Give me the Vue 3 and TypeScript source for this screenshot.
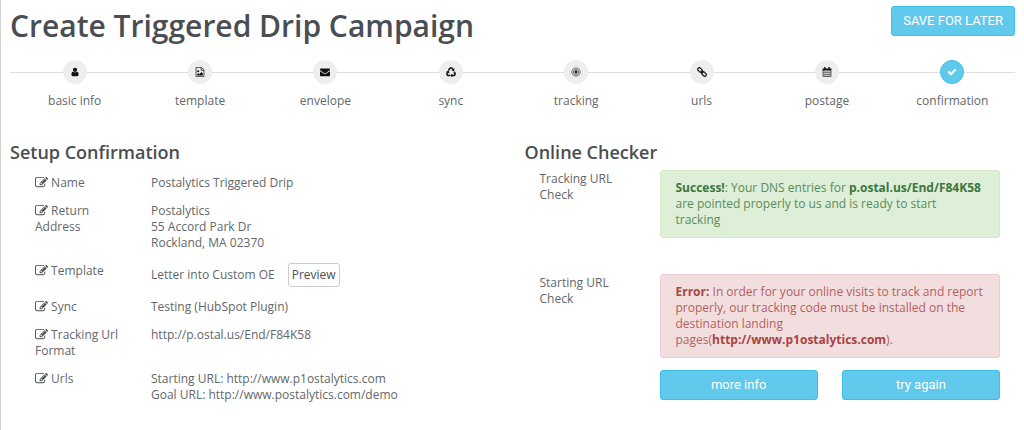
<script setup lang="ts">
interface Step {
  name: string
  icon: string
}

interface Row {
  label: string
  lines: string[]
  preview?: boolean
}

const steps: Step[] = [
  { name: 'basic info', icon: 'user' },
  { name: 'template', icon: 'image' },
  { name: 'envelope', icon: 'envelope' },
  { name: 'sync', icon: 'recycle' },
  { name: 'tracking', icon: 'target' },
  { name: 'urls', icon: 'link' },
  { name: 'postage', icon: 'calendar' },
  { name: 'confirmation', icon: 'check' },
]
const current = 'confirmation'

const rows: Row[] = [
  { label: 'Name', lines: ['Postalytics Triggered Drip'] },
  { label: 'Return Address', lines: ['Postalytics', '55 Accord Park Dr', 'Rockland, MA 02370'] },
  { label: 'Template', lines: ['Letter into Custom OE'], preview: true },
  { label: 'Sync', lines: ['Testing (HubSpot Plugin)'] },
  { label: 'Tracking Url Format', lines: ['http://p.ostal.us/End/F84K58'] },
  {
    label: 'Urls',
    lines: ['Starting URL: http://www.p1ostalytics.com', 'Goal URL: http://www.postalytics.com/demo'],
  },
]
</script>

<template>
  <main class="page">
    <header class="top">
      <h1>Create Triggered Drip Campaign</h1>
      <button type="button" class="primary save">SAVE FOR LATER</button>
    </header>

    <ol class="steps">
      <li v-for="s in steps" :key="s.name" :class="{ active: s.name === current }">
        <span class="dot">
          <svg v-if="s.icon === 'user'" viewBox="0 0 1792 1792" aria-hidden="true"><path d="M1536 1399q0 109-62.5 187t-150.5 78h-854q-88 0-150.5-78t-62.5-187q0-85 8.5-160.5t31.5-152 58.5-131 94-89 134.5-34.5q131 128 313 128t313-128q76 0 134.5 34.5t94 89 58.5 131 31.5 152 8.5 160.5zm-256-887q0 159-112.5 271.5t-271.5 112.5-271.5-112.5-112.5-271.5 112.5-271.5 271.5-112.5 271.5 112.5 112.5 271.5z" /></svg>
          <svg v-else-if="s.icon === 'image'" viewBox="0 0 14 14" aria-hidden="true"><path d="M1.5.5h7.500l3.500 3.500v9.500h-11z M8.500.5v4h4" fill="none" stroke="currentColor" /><circle cx="4.500" cy="6" r="1.500" /><path d="M3 12v-2l1.500-1.500 1.500 1.500 3-3 2 2v3z" /></svg>
          <svg v-else-if="s.icon === 'envelope'" viewBox="0 0 1792 1792" aria-hidden="true"><path d="M1792 710v794q0 66-47 113t-113 47h-1472q-66 0-113-47t-47-113v-794q44 49 101 87 362 246 497 345 57 42 92.500 65.500t94.500 48 110 24.500h2q51 0 110-24.500t94.500-48 92.500-65.500q170-123 498-345 57-39 100-87zm0-294q0 79-49 151t-122 123q-376 261-468 325-10 7-42.500 31t-54 38.500-52 32.500-57.500 27-50 9h-2q-23 0-50-9t-57.500-27-52-32.500-54-38.500-42.500-31q-91-64-262-182.500t-205-142.500q-62-42-117-115.500t-55-136.500q0-78 41.500-130t118.500-52h1472q65 0 112.500 47t47.500 113z" /></svg>
          <svg v-else-if="s.icon === 'recycle'" viewBox="0 0 14 14" aria-hidden="true">
            <path d="M3.300 5.200l1.700-3q.5-.8 1.400-.8h1.300q.8 0 1.300.8l.8 1.400M11.300 6.500l1.200 2q.5.900 0 1.700l-.6 1q-.4.700-1.300.7h-2.800M5.500 11.900h-2.200q-.9 0-1.300-.7l-.5-.9q-.4-.8 0-1.600l1-1.700" fill="none" stroke="currentColor" stroke-width="2.200" />
            <path d="M11.900 1.900l-.7 4-3.700-1.300zM8.700 9v5.600l-2.800-2.800zM.3 6.100l3.800-.6.9 3.900z" />
          </svg>
          <svg v-else-if="s.icon === 'target'" viewBox="0 0 14 14" aria-hidden="true"><g fill="none" stroke="currentColor" opacity=".8"><circle cx="7" cy="7" r="5.800" /><circle cx="7" cy="7" r="3.700" /></g><circle cx="7" cy="7" r="2" /></svg>
          <svg v-else-if="s.icon === 'link'" viewBox="0 0 14 14" aria-hidden="true"><g fill="none" stroke="currentColor" stroke-width="1.700" transform="rotate(45 7 7)"><rect x="-.5" y="4.800" width="7" height="4.400" rx="2" /><rect x="7.500" y="4.800" width="7" height="4.400" rx="2" /><path d="M4.500 7h5" /></g></svg>
          <svg v-else-if="s.icon === 'calendar'" viewBox="0 0 14 14" aria-hidden="true"><path d="M1 2h12v3H1zM3 0h2v3H3zM9 0h2v3H9z" /><path d="M1.500 3v10.500h11V3" fill="none" stroke="currentColor" /><path d="M1.500 7.500h11M1.500 10.500h11M4.200 5v8M7 5v8M9.800 5v8" fill="none" stroke="currentColor" stroke-width=".6" /></svg>
          <svg v-else viewBox="0 0 1792 1792" aria-hidden="true"><path d="M1671 566q0 40-28 68l-724 724-136 136q-28 28-68 28t-68-28l-136-136-362-362q-28-28-28-68t28-68l136-136q28-28 68-28t68 28l294 295 656-657q28-28 68-28t68 28l136 136q28 28 28 68z" /></svg>
        </span>
        <span class="step-name">{{ s.name }}</span>
      </li>
    </ol>

    <div class="columns">
      <section>
        <h2>Setup Confirmation</h2>
        <dl class="rows">
          <div v-for="r in rows" :key="r.label" class="row">
            <dt>
              <svg class="edit" viewBox="0 0 1792 1792" aria-hidden="true"><path d="M888 1184l116-116-152-152-116 116v56h96v96h56zm440-720q-16-16-33 1l-350 350q-17 17-1 33t33-1l350-350q17-17 1-33zm80 594v190q0 119-84.500 203.500t-203.500 84.500h-832q-119 0-203.500-84.500t-84.500-203.500v-832q0-119 84.500-203.500t203.500-84.500h832q63 0 117 25 15 7 18 23 3 17-9 29l-49 49q-14 14-32 8-23-6-45-6h-832q-66 0-113 47t-47 113v832q0 66 47 113t113 47h832q66 0 113-47t47-113v-126q0-13 9-22l64-64q15-15 35-7t20 29zm-96-738l288 288-672 672h-288v-288zm444 132l-92 92-288-288 92-92q28-28 68-28t68 28l152 152q28 28 28 68t-28 68z" /></svg>
              {{ r.label }}
            </dt>
            <dd :class="{ inline: r.preview }">
              <div v-for="l in r.lines" :key="l">{{ l }}</div>
              <button v-if="r.preview" type="button" class="preview">Preview</button>
            </dd>
          </div>
        </dl>
      </section>

      <section>
        <h2>Online Checker</h2>
        <div class="checks">
          <div class="check">
            <div class="check-name">Tracking URL Check</div>
            <p class="alert success">
              <strong>Success!</strong>: Your DNS entries for <strong>p.ostal.us/End/F84K58</strong> are pointed properly to us and is ready to start tracking
            </p>
          </div>
          <div class="check">
            <div class="check-name">Starting URL Check</div>
            <div>
              <p class="alert error">
                <strong>Error:</strong> In order for your online visits to track and report properly, our tracking code must be installed on the destination landing pages(<strong>http://www.p1ostalytics.com</strong>).
              </p>
              <div class="actions">
                <button type="button" class="primary">more info</button>
                <button type="button" class="primary">try again</button>
              </div>
            </div>
          </div>
        </div>
      </section>
    </div>
  </main>
</template>

<style>
body {
  margin: 0;
  background: #fff;
}
</style>

<style scoped>
.page {
  box-sizing: border-box;
  min-height: 100vh;
  padding: 6px 9px 0 9px;
  border-left: 1px solid #d4d4d4;
  font: 12px/16px "Open Sans", "Noto Sans", sans-serif;
  color: #62676a;
}
.top {
  display: flex;
  justify-content: space-between;
  align-items: flex-start;
}
h1 {
  margin: 0;
  font-size: 30px;
  line-height: 40px;
  font-weight: 600;
  color: #484e52;
}
button {
  font: inherit;
  cursor: pointer;
}
.primary {
  height: 30px;
  padding: 0 11px;
  border: 1px solid #3cbfea;
  border-radius: 3px;
  background: #61c9eb;
  color: #fff;
  font: 13px/16px Roboto, sans-serif;
}
.steps {
  display: grid;
  grid-template-columns: repeat(8, 1fr);
  margin: 14px 0 0;
  padding: 0 0 0 2px;
  list-style: none;
  background: linear-gradient(#dfdfdf, #dfdfdf) 0 12px / 100% 1px no-repeat;
}
.steps li {
  display: flex;
  flex-direction: column;
  align-items: center;
  gap: 9px;
}
.dot {
  display: grid;
  place-items: center;
  box-sizing: border-box;
  width: 24px;
  height: 24px;
  border-radius: 50%;
  background: #eee;
  color: #111;
}
.dot svg {
  width: 10px;
  height: 10px;
  fill: currentColor;
}
.active .dot {
  border: 1px solid #3cbfea;
  background: #61c9eb;
  color: #fff;
}
.columns {
  display: grid;
  grid-template-columns: 1fr 1fr;
  gap: 24px;
  margin-top: 31px;
}
h2 {
  margin: 0;
  font-size: 18px;
  line-height: 24px;
  font-weight: 600;
  color: #484e52;
}
.rows {
  display: flex;
  flex-direction: column;
  gap: 12px;
  margin: 11px 0 0;
  padding-left: 25px;
}
.row {
  display: grid;
  grid-template-columns: 84px 1fr;
  gap: 32px;
}
dd {
  margin: 0;
}
.inline {
  display: flex;
  align-items: center;
  gap: 13px;
}
.preview {
  height: 24px;
  padding: 0 3px;
  border: 1px solid #ccc;
  border-radius: 3px;
  background: #fff;
  color: #484e52;
}
.edit {
  width: 13px;
  height: 13px;
  vertical-align: -2px;
  fill: #484e52;
}
.checks {
  display: flex;
  flex-direction: column;
  gap: 36px;
  margin-top: 6px;
  padding: 0 15px;
}
.check {
  display: grid;
  grid-template-columns: 96px 1fr;
  gap: 24px;
}
.check-name {
  width: 84px;
  padding-top: 1px;
}
.alert {
  margin: 0;
  padding: 9px 15px;
  border: 1px solid;
  border-radius: 3px;
}
.success {
  padding-right: 16px;
  border-color: #d6e9c6;
  background: #deefd8;
  color: #5a8a5c;
}
.success strong {
  color: #3c763d;
}
.error {
  border-color: #ebccd1;
  background: #f2dede;
  color: #b45f5e;
}
.error strong {
  color: #a94442;
}
.actions {
  display: grid;
  grid-template-columns: 1fr 1fr;
  gap: 24px;
  margin-top: 12px;
}
</style>
